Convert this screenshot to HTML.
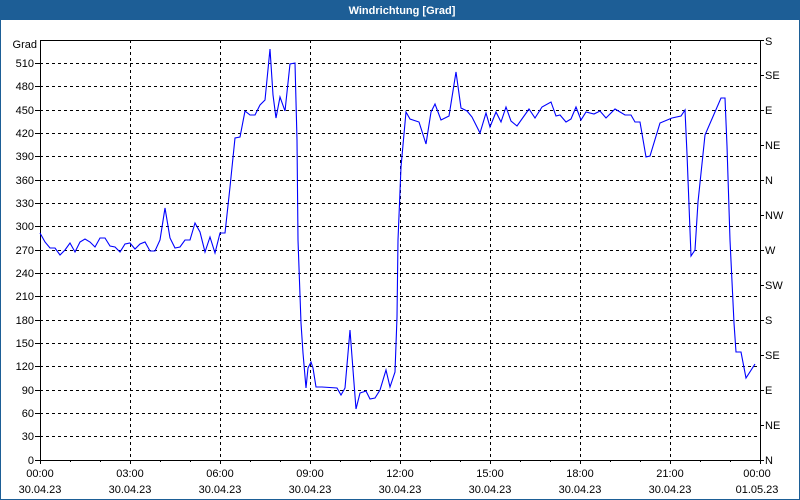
<!DOCTYPE html>
<html><head><meta charset="utf-8"><style>
html,body{margin:0;padding:0;background:#fff;}
body{width:800px;height:500px;overflow:hidden;position:relative;font-family:"Liberation Sans",sans-serif;}
</style></head><body>
<svg width="800" height="500" xmlns="http://www.w3.org/2000/svg" style="position:absolute;left:0;top:0">
<rect x="0" y="0" width="800" height="500" fill="#fff"/>
<rect x="0.5" y="0.5" width="799" height="499" fill="none" stroke="#1d5e96"/>
<rect x="0" y="0" width="800" height="20" fill="#1d5e96"/>
<text x="402" y="14" fill="#fff" font-size="11" font-weight="bold" text-anchor="middle" font-family="Liberation Sans, sans-serif">Windrichtung [Grad]</text>
<g stroke="#000" stroke-width="1" stroke-dasharray="3,3" fill="none" shape-rendering="crispEdges">
<path d="M40 63.5H760M40 86.5H760M40 110.5H760M40 133.5H760M40 156.5H760M40 180.5H760M40 203.5H760M40 226.5H760M40 250.5H760M40 273.5H760M40 296.5H760M40 320.5H760M40 343.5H760M40 366.5H760M40 390.5H760M40 413.5H760M40 436.5H760"/>
<path d="M130.5 40V460M220.5 40V460M310.5 40V460M400.5 40V460M490.5 40V460M580.5 40V460M670.5 40V460"/>
</g>
<g stroke="#000" stroke-width="1" fill="none" shape-rendering="crispEdges">
<path d="M40.5 460.5V40.5H760.5V460.5H40.5"/>
<path d="M760 40.5h4M760 75.5h4M760 110.5h4M760 145.5h4M760 180.5h4M760 215.5h4M760 250.5h4M760 285.5h4M760 320.5h4M760 355.5h4M760 390.5h4M760 425.5h4M760 460.5h4"/>
<path d="M40.5 460v4M70.5 460v2M100.5 460v2M130.5 460v4M160.5 460v2M190.5 460v2M220.5 460v4M250.5 460v2M280.5 460v2M310.5 460v4M340.5 460v2M370.5 460v2M400.5 460v4M430.5 460v2M460.5 460v2M490.5 460v4M520.5 460v2M550.5 460v2M580.5 460v4M610.5 460v2M640.5 460v2M670.5 460v4M700.5 460v2M730.5 460v2M760.5 460v4"/>
<path d="M35 63.5h5M35 86.5h5M35 110.5h5M35 133.5h5M35 156.5h5M35 180.5h5M35 203.5h5M35 226.5h5M35 250.5h5M35 273.5h5M35 296.5h5M35 320.5h5M35 343.5h5M35 366.5h5M35 390.5h5M35 413.5h5M35 436.5h5M35 460.5h5"/>
</g>
<g font-size="11" fill="#000" text-anchor="end" font-family="Liberation Sans, sans-serif">
<text x="37" y="48">Grad</text>
<text x="34" y="67">510</text><text x="34" y="90">480</text><text x="34" y="114">450</text><text x="34" y="137">420</text><text x="34" y="160">390</text><text x="34" y="184">360</text><text x="34" y="207">330</text><text x="34" y="230">300</text><text x="34" y="254">270</text><text x="34" y="277">240</text><text x="34" y="300">210</text><text x="34" y="324">180</text><text x="34" y="347">150</text><text x="34" y="370">120</text><text x="34" y="394">90</text><text x="34" y="417">60</text><text x="34" y="440">30</text><text x="34" y="464">0</text>
</g>
<g font-size="11" fill="#000" font-family="Liberation Sans, sans-serif">
<text x="765" y="45">S</text><text x="765" y="79">SE</text><text x="765" y="114">E</text><text x="765" y="149">NE</text><text x="765" y="184">N</text><text x="765" y="219">NW</text><text x="765" y="254">W</text><text x="765" y="289">SW</text><text x="765" y="324">S</text><text x="765" y="359">SE</text><text x="765" y="394">E</text><text x="765" y="429">NE</text><text x="765" y="464">N</text>
</g>
<g font-size="11" fill="#000" text-anchor="middle" font-family="Liberation Sans, sans-serif">
<text x="40" y="477">00:00</text><text x="130" y="477">03:00</text><text x="220" y="477">06:00</text><text x="310" y="477">09:00</text><text x="400" y="477">12:00</text><text x="490" y="477">15:00</text><text x="580" y="477">18:00</text><text x="670" y="477">21:00</text><text x="757" y="477">00:00</text>
<text x="40" y="493">30.04.23</text><text x="130" y="493">30.04.23</text><text x="220" y="493">30.04.23</text><text x="310" y="493">30.04.23</text><text x="400" y="493">30.04.23</text><text x="490" y="493">30.04.23</text><text x="580" y="493">30.04.23</text><text x="670" y="493">30.04.23</text><text x="757" y="493">01.05.23</text>
</g>
<polyline fill="none" stroke="#0000ff" stroke-width="1.1" points="40,233 45,242 50,248 55,248 60,255 65,250 70,243 75,252 80,242 85,239 90,242 95,247 100,238 105,238 110,246 115,247 120,252 125,244 130,243 135,249 140,244 145,242 150,251 155,251 160,240 165,208 170,238 175,248 180,247 185,240 190,240 195,223 200,232 205,252 210,237 215,253 220,233 225,233 230,187 235,138 240,137 245,111 250,115 255,115 260,105 265,100 270,49 273,95 276,118 280,97 285,111 290,64 295,63 297,140 298,240 301,323 303,353 306,388 308,368 311,362 313,368 316,387 322,387 337,388 341,395 345,388 350,330 353,370 356,409 360,393 366,391 370,399 375,398 380,390 386,370 390,387 395,372 397,317 398,240 401,167 406,112 410,119 419,122 426,144 431,112 435,104 441,120 449,116 456,72 461,108 467,111 472,117 480,133 486,113 490,127 496,112 501,122 506,107 511,121 517,126 529,109 535,118 542,107 551,102 556,116 560,115 566,122 571,119 576,107 581,120 586,112 594,114 600,111 606,118 615,109 625,115 631,115 635,122 640,122 646,157 650,156 660,123 672,118 681,116 685,110 687,154 691,256 695,250 698,202 705,135 721,98 725,98 727,146 730,240 734,323 736,352 741,352 746,378 755,364"/>
</svg>
</body></html>
